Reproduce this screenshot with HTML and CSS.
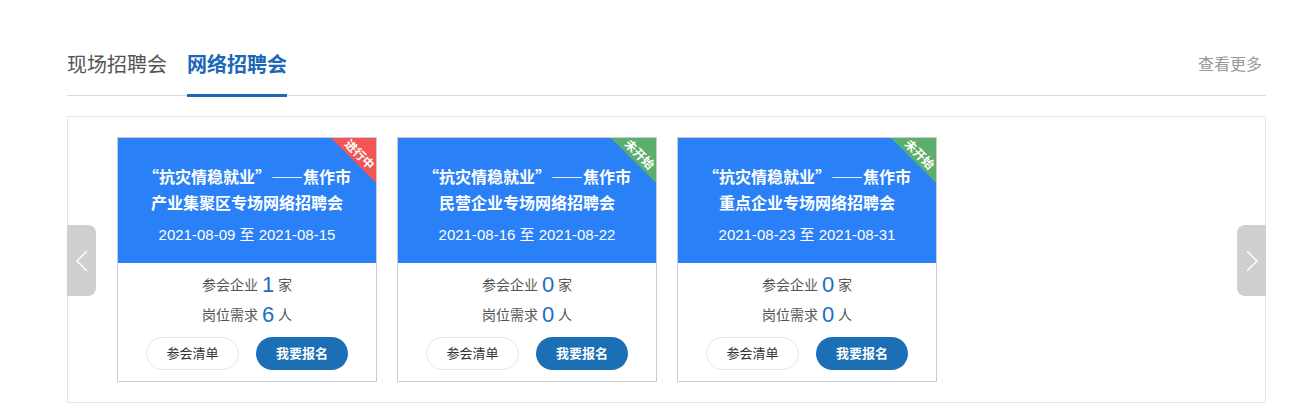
FILE: index.html
```html
<!DOCTYPE html>
<html lang="zh-cn">
<head>
    <meta charset="UTF-8">
    <meta name="viewport" content="width=device-width, initial-scale=1.0">
    <title>招聘会</title>
    <link rel="stylesheet" href="styles.css">
</head>
<body>
    <div class="wrap">
        <!-- 标签栏 -->
        <div class="tabs">
            <a class="tab">现场招聘会</a>
            <a class="tab active">网络招聘会</a>
            <a class="more">查看更多</a>
        </div>

        <!-- 招聘会列表 -->
        <div class="box">
            <a class="arrow arrow-left">
                <svg width="12" height="22" viewBox="0 0 12 22"><path d="M11 1 L1 11 L11 21" fill="none" stroke="#fff" stroke-width="1.5"/></svg>
            </a>

            <div class="cards">
                <div class="card">
                    <div class="card-head">
                        <div class="tag tag-red"><span>进行中</span></div>
                        <div class="card-title">“抗灾情稳就业”——焦作市<br>产业集聚区专场网络招聘会</div>
                        <div class="card-date">2021-08-09 至 2021-08-15</div>
                    </div>
                    <div class="card-body">
                        <div class="stat">参会企业 <em>1</em> 家</div>
                        <div class="stat">岗位需求 <em>6</em> 人</div>
                        <div class="btns">
                            <a class="btn btn-line">参会清单</a>
                            <a class="btn btn-blue">我要报名</a>
                        </div>
                    </div>
                </div>

                <div class="card">
                    <div class="card-head">
                        <div class="tag tag-green"><span>未开始</span></div>
                        <div class="card-title">“抗灾情稳就业”——焦作市<br>民营企业专场网络招聘会</div>
                        <div class="card-date">2021-08-16 至 2021-08-22</div>
                    </div>
                    <div class="card-body">
                        <div class="stat">参会企业 <em>0</em> 家</div>
                        <div class="stat">岗位需求 <em>0</em> 人</div>
                        <div class="btns">
                            <a class="btn btn-line">参会清单</a>
                            <a class="btn btn-blue">我要报名</a>
                        </div>
                    </div>
                </div>

                <div class="card">
                    <div class="card-head">
                        <div class="tag tag-green"><span>未开始</span></div>
                        <div class="card-title">“抗灾情稳就业”——焦作市<br>重点企业专场网络招聘会</div>
                        <div class="card-date">2021-08-23 至 2021-08-31</div>
                    </div>
                    <div class="card-body">
                        <div class="stat">参会企业 <em>0</em> 家</div>
                        <div class="stat">岗位需求 <em>0</em> 人</div>
                        <div class="btns">
                            <a class="btn btn-line">参会清单</a>
                            <a class="btn btn-blue">我要报名</a>
                        </div>
                    </div>
                </div>
            </div>

            <a class="arrow arrow-right">
                <svg width="12" height="22" viewBox="0 0 12 22"><path d="M1 1 L11 11 L1 21" fill="none" stroke="#fff" stroke-width="1.5"/></svg>
            </a>
        </div>
    </div>
</body>
</html>
```

FILE: styles.css
```css
body {
    margin: 0;
    background-color: #fff;
    font-family: "Liberation Sans", "Noto Sans CJK SC", sans-serif;
    color: #333;
}

.wrap {
    width: 1199px;
    margin-left: 67px;
}

/* 标签栏 */
.tabs {
    display: flex;
    align-items: flex-end;
    gap: 20px;
    padding-top: 50px;
    border-bottom: 1px solid #ddd;
}

.tab {
    font-size: 20px;
    line-height: 30px;
    color: #555;
    padding-bottom: 14px;
    border-bottom: 3px solid transparent;
    margin-bottom: -2px;
}

.tab.active {
    color: #1a68b8;
    font-weight: bold;
    border-bottom-color: #1a68b8;
}

.more {
    margin-left: auto;
    margin-right: 4px;
    align-self: flex-start;
    font-size: 16px;
    line-height: 30px;
    color: #999;
}

/* 列表框 */
.box {
    position: relative;
    margin-top: 20px;
    height: 287px;
    box-sizing: border-box;
    border: 1px solid #e6e6e6;
    padding: 20px 49px 0;
}

.arrow {
    position: absolute;
    top: 108px;
    width: 29px;
    height: 71px;
    background-color: #cfcfcf;
    display: flex;
    align-items: center;
    justify-content: center;
}

.arrow-left {
    left: -1px;
    border-radius: 0 8px 8px 0;
}

.arrow-right {
    right: -1px;
    border-radius: 8px 0 0 8px;
}

.cards {
    display: flex;
    gap: 20px;
}

.card {
    width: 258px;
    border: 1px solid #ccc;
}

.card-head {
    position: relative;
    height: 125px;
    box-sizing: border-box;
    padding-top: 25px;
    background-color: #2a80f6;
    color: #fff;
    text-align: center;
}

.card-title {
    font-family: "Noto Sans CJK SC", sans-serif;
    font-size: 16px;
    font-weight: bold;
    line-height: 26px;
}

.card-date {
    margin-top: 10px;
    font-size: 15px;
    line-height: 20px;
}

/* 状态角标 */
.tag {
    position: absolute;
    top: 0;
    right: 0;
    width: 45px;
    height: 45px;
    clip-path: polygon(0 0, 100% 0, 100% 100%);
}

.tag-red {
    background-color: #f25555;
}

.tag-green {
    background-color: #5bae6b;
}

.tag span {
    position: absolute;
    top: 8px;
    right: -14px;
    width: 60px;
    font-family: "Noto Sans CJK SC", sans-serif;
    font-size: 12px;
    font-weight: bold;
    line-height: 16px;
    text-align: center;
    transform: rotate(45deg);
}

.card-body {
    padding: 7px 0 11px;
    text-align: center;
}

.stat {
    font-size: 14px;
    line-height: 30px;
    color: #555;
}

.stat em {
    font-style: normal;
    font-size: 22px;
    color: #1a6fbf;
    vertical-align: -2px;
}

.btns {
    display: flex;
    justify-content: center;
    gap: 17px;
    margin-top: 7px;
}

.btn {
    width: 92px;
    height: 33px;
    line-height: 33px;
    border-radius: 17px;
    font-size: 13px;
    box-sizing: border-box;
}

.btn-line {
    width: 93px;
    border: 1px solid #e6e6e6;
    line-height: 31px;
    color: #333;
}

.btn-blue {
    background-color: #1a6fb5;
    color: #fff;
    font-weight: bold;
}
```
